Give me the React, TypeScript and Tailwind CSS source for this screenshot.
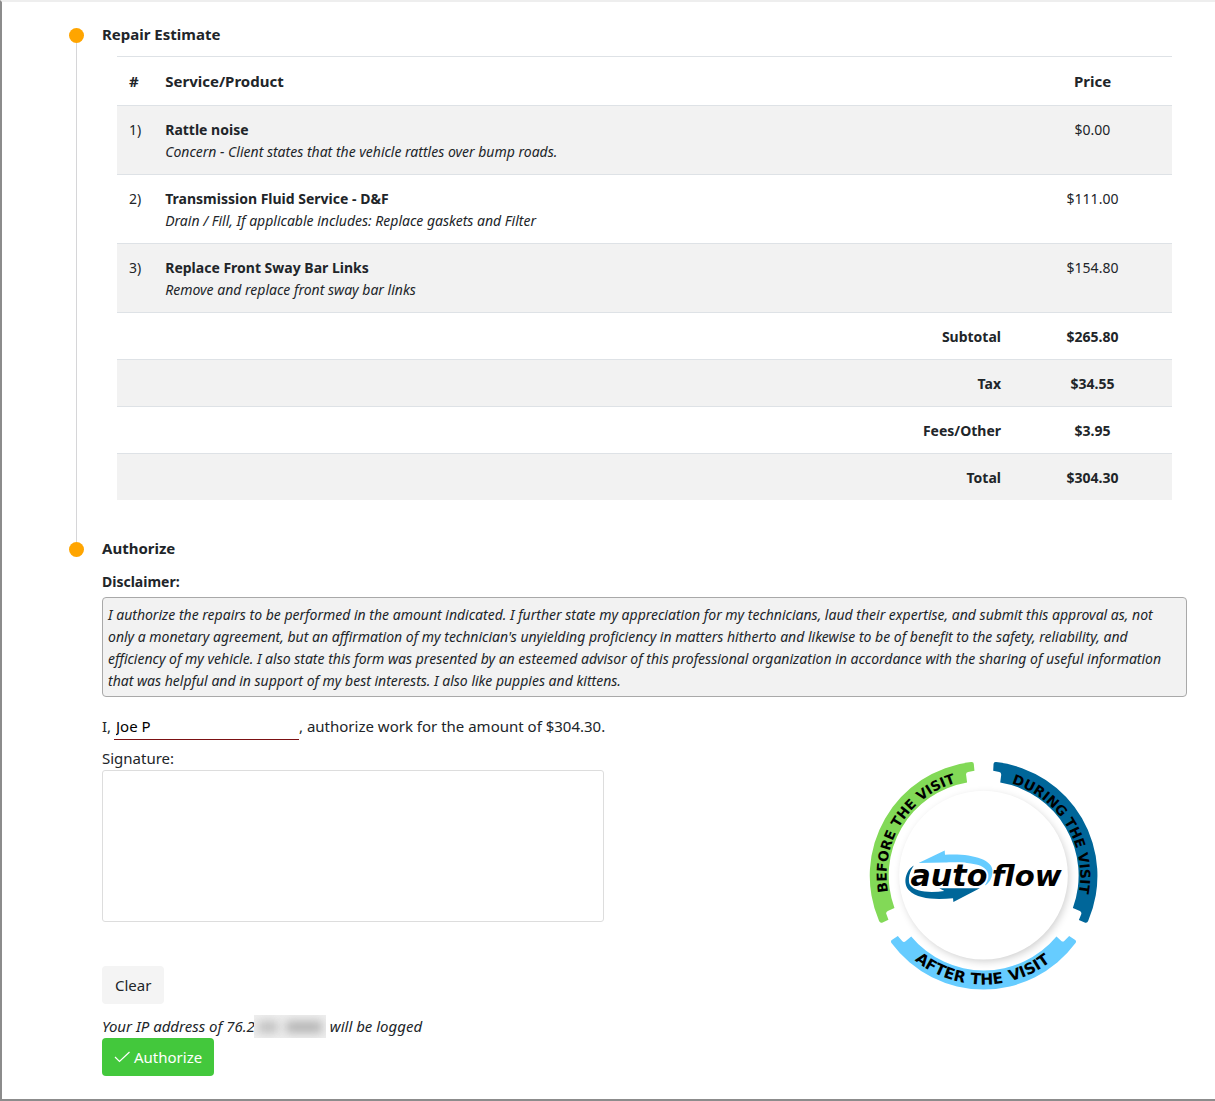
import { Fragment } from "react";

const services = [
  {
    name: "Rattle noise",
    note: "Concern - Client states that the vehicle rattles over bump roads.",
    price: "$0.00",
  },
  {
    name: "Transmission Fluid Service - D&F",
    note: "Drain / Fill, If applicable includes: Replace gaskets and Filter",
    price: "$111.00",
  },
  {
    name: "Replace Front Sway Bar Links",
    note: "Remove and replace front sway bar links",
    price: "$154.80",
  },
];

const totals = [
  { label: "Subtotal", value: "$265.80" },
  { label: "Tax", value: "$34.55" },
  { label: "Fees/Other", value: "$3.95" },
  { label: "Total", value: "$304.30" },
];

function Marker({ last }: { last?: boolean }) {
  return (
    <div className="flex w-[15px] shrink-0 flex-col items-center">
      <span className="size-[15px] shrink-0 rounded-full bg-[#ffa500]" />
      {!last && <span className="w-px grow bg-[#d6d6d8]" />}
    </div>
  );
}

function Logo() {
  return (
    <svg viewBox="0 0 750 750" className="size-[251px]" role="img" aria-label="autoflow">
      <defs>
        <path id="before-arc" d="M87 424 A287 287 0 0 1 400 88" />
        <path id="during-arc" d="M456 100 A288 288 0 0 1 628 510" />
        <path id="after-arc" d="M166 628 A328 328 0 0 0 660 530" />
        <filter id="soft" x="-20%" y="-20%" width="140%" height="140%">
          <feGaussianBlur stdDeviation="13" />
        </filter>
      </defs>
      <g>
        <path
          fill="#82d957"
          d="M69 516 Q63 518 60 511 A342 342 0 0 1 335 36 Q343 35 343 42 L345 62 L326 66 Q319 67 320 74 L323 97 A282 282 0 0 0 106 472 L86 481 Q79 485 82 491 L88 507 Z"
        />
        <path
          fill="#006699"
          d="M401 62 L402 42 Q402 35 410 36 A342 342 0 0 1 685 510 Q682 518 676 516 L657 508 L664 491 Q666 484 660 481 L639 472 A282 282 0 0 0 422 97 L425 74 Q425 67 419 66 Z"
        />
        <path
          fill="#66ccff"
          d="M97 577 Q93 571 99 567 L116 556 L129 571 Q134 576 140 571 L156 557 A282 282 0 0 0 590 557 L604 570 Q609 575 614 570 L628 556 L645 567 Q651 571 647 577 A342 342 0 0 1 97 577 Z"
        />
      </g>
      <circle cx="378" cy="382" r="249" fill="#000" opacity="0.2" filter="url(#soft)" />
      <circle cx="372" cy="374" r="252" fill="#fff" />
      <g fontFamily="'DejaVu Sans', Verdana, sans-serif" fontWeight="700" fontSize="41" fill="#000">
        <text>
          <textPath href="#before-arc">BEFORE THE VISIT</textPath>
        </text>
        <text>
          <textPath href="#during-arc">DURING THE VISIT</textPath>
        </text>
        <text fontSize="46">
          <textPath href="#after-arc">AFTER</textPath>
          <textPath href="#after-arc" startOffset="182">THE</textPath>
          <textPath href="#after-arc" startOffset="304">VISIT</textPath>
        </text>
      </g>
      <path
        fill="#66ccff"
        d="M178 338 L256 300 L257 313 C330 308 400 325 399 362 C398 385 388 398 376 405 C390 380 390 350 350 342 C320 334 280 335 255 336 Z"
      />
      <path
        fill="#006699"
        d="M164 345 C138 360 130 400 150 420 C175 446 230 448 281 443 L282 454 L361 413 L240 413 L255 421 C215 428 165 425 152 402 C145 385 152 362 164 345 Z"
      />
      <g
        fontFamily="'DejaVu Sans', Verdana, sans-serif"
        fontWeight="700"
        fontStyle="italic"
        fill="#000"
      >
        <text x="154" y="406" fontSize="90" stroke="#fff" strokeWidth="10" paintOrder="stroke">auto</text>
        <text x="397" y="407" fontSize="87">flow</text>
      </g>
    </svg>
  );
}

function App() {
  return (
    <Fragment>
      <div className="border-t-2 border-b-2 border-l-2 border-t-[#eeeeee] border-b-[#8c8c8c] border-l-[#8c8c8c] bg-white pt-[26px] pr-7 pb-[23px] pl-[67px] font-['Noto_Sans',sans-serif] text-[14px] leading-[22px] text-[#212529]">
        <section className="flex gap-[18px]">
          <Marker />
          <div className="min-w-0 grow pr-[15px] pb-[42px] pl-[15px]">
            <h2 className="-mt-[5px] -ml-[15px] pb-[11px] text-[15px] leading-[22px] font-bold">Repair Estimate</h2>
            <table className="w-full border-collapse">
              <thead>
                <tr className="border-t border-[#dee2e6] text-[15px]">
                  <th className="w-9 px-3 pt-[13px] pb-[13px] text-left">#</th>
                  <th className="px-3 text-left">Service/Product</th>
                  <th className="w-[159px] px-3 text-center">Price</th>
                </tr>
              </thead>
              <tbody>
                {services.map((item, i) => (
                  <tr key={item.name} className="border-t border-[#dee2e6] align-top odd:bg-[#f2f2f2]">
                    <td className="px-3 pt-[13px] pb-[11px]">{i + 1})</td>
                    <td className="px-3 pt-[13px] pb-[11px]">
                      <div className="font-bold">{item.name}</div>
                      <em>{item.note}</em>
                    </td>
                    <td className="px-3 pt-[13px] pb-[11px] text-center">{item.price}</td>
                  </tr>
                ))}
                {totals.map((row) => (
                  <tr key={row.label} className="border-t border-[#dee2e6] font-bold odd:bg-[#f2f2f2]">
                    <td colSpan={2} className="px-3 pt-[13px] pb-[11px] text-right">{row.label}</td>
                    <td className="px-3 pt-[13px] pb-[11px] text-center">{row.value}</td>
                  </tr>
                ))}
              </tbody>
            </table>
          </div>
        </section>

        <section className="flex gap-[18px]">
          <Marker last />
          <div className="min-w-0 grow">
            <h2 className="-mt-[5px] text-[15px] leading-[22px] font-bold">Authorize</h2>
            <h3 className="mt-3 font-bold">Disclaimer:</h3>
            <p className="mt-1 rounded border border-[#a9a9a9] bg-[#f2f2f2] pt-[6px] pr-[5px] pb-1 pl-[5px] italic">
              I authorize the repairs to be performed in the amount indicated. I further state my appreciation for my
              technicians, laud their expertise, and submit this approval as, not only a monetary agreement, but an
              affirmation of my technician's unyielding proficiency in matters hitherto and likewise to be of benefit to
              the safety, reliability, and efficiency of my vehicle. I also state this form was presented by an esteemed
              advisor of this professional organization in accordance with the sharing of useful information that was
              helpful and in support of my best interests. I also like puppies and kittens.
            </p>
            <div className="mt-4 flex items-start text-[15px] leading-6">
              <label htmlFor="signer" className="w-3 pt-px">I,</label>
              <input
                id="signer"
                defaultValue="Joe P"
                className="h-[27px] w-[185px] border-b border-[#7b1113] px-[2px] text-black outline-none"
              />
              <span className="pt-px whitespace-pre">, authorize work for the amount of $304.30.</span>
            </div>
            <div className="flex justify-between">
              <div className="w-[502px] text-[15px] leading-6">
                <div className="mt-[6px]">Signature:</div>
                <canvas aria-label="Signature" className="block h-[152px] w-full rounded-[3px] border border-[#dddddd]" />
                <button type="button" className="mt-11 block h-[38px] rounded bg-[#f4f4f4] px-[13px]">
                  Clear
                </button>
                <p className="mt-[11px] flex leading-[23px] italic">
                  Your IP address of 76.2
                  <span className="-ml-px flex h-[23px] w-[72px] items-center justify-around overflow-hidden bg-[#efefef]">
                    <span className="h-3 w-5 bg-[#c0c0c0] blur-[5px]" />
                    <span className="h-3 w-9 bg-[#b4b4b4] blur-[5px]" />
                  </span>
                  <span className="pl-1">will be logged</span>
                </p>
                <button
                  type="button"
                  className="flex h-[38px] items-center gap-[3px] rounded bg-[#43c83c] px-3 text-white"
                >
                  <svg viewBox="0 0 17 16" className="h-4 w-[17px]" fill="none" stroke="currentColor" strokeWidth="1.2">
                    <path d="M1 8 L5.5 12.5 L15.5 3" />
                  </svg>
                  Authorize
                </button>
              </div>
              <div className="mt-[10px] mr-[77px]">
                <Logo />
              </div>
            </div>
          </div>
        </section>
      </div>
    </Fragment>
  );
}

export default App;
